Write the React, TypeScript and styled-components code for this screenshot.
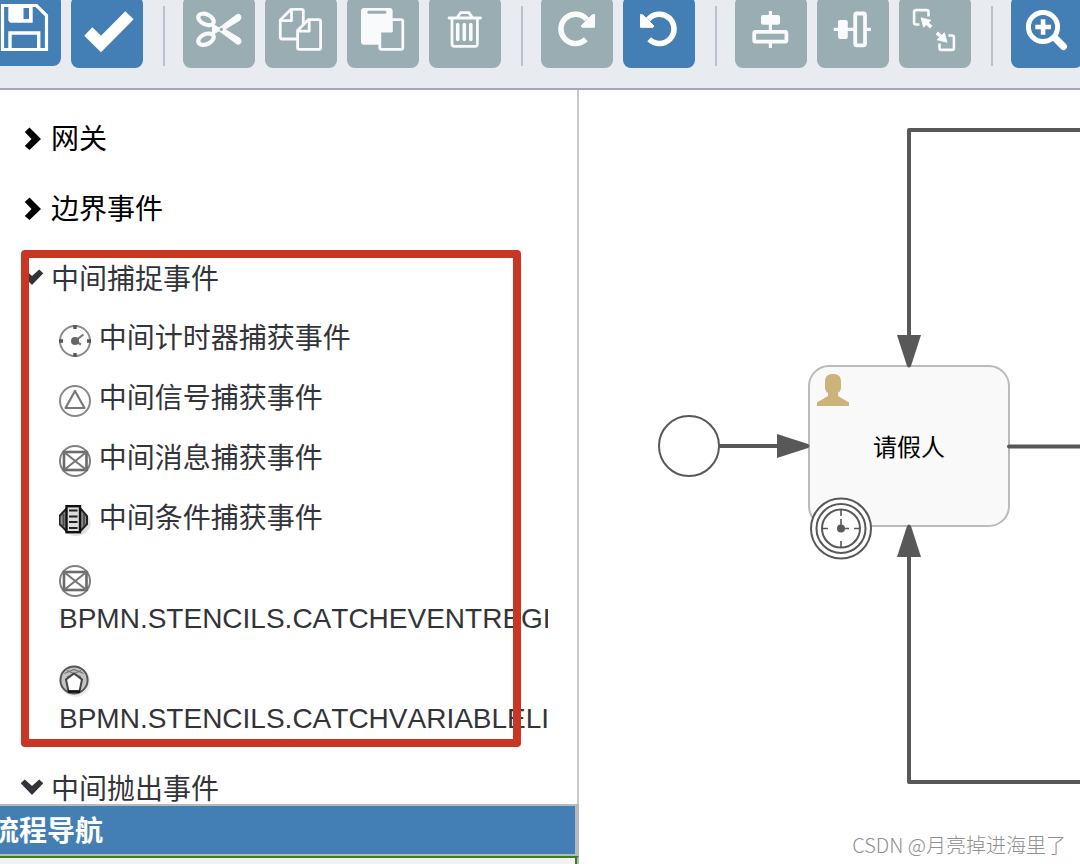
import React from "react";
import styled, { createGlobalStyle, css } from "styled-components";

const BLUE = "#437fb5";
const MUTED = "#99adb3";
const INK = "#585858";

const GlobalStyle = createGlobalStyle`
  *, *::before, *::after { box-sizing: border-box; }
  html, body { margin: 0; }
  body {
    overflow: hidden;
    background: #fff;
    color: #333439;
    font-family: "Liberation Sans", "Noto Sans CJK SC", sans-serif;
    font-size: 28px;
  }
`;

const Page = styled.div`
  position: relative;
  display: flex;
  flex-direction: column;
  height: 100vh;
  overflow: hidden;
`;

const Toolbar = styled.header`
  display: flex;
  align-items: flex-end;
  flex: none;
  gap: 10px;
  height: 90px;
  padding-bottom: 20px;
  overflow: hidden;
  background: #e8ebf0;
  border-bottom: 2px solid #a5a6b8;
`;

const ToolButton = styled.button<{ $first?: boolean }>`
  flex: none;
  width: 72px;
  height: 72px;
  padding: 0;
  border: 0;
  border-radius: 8px;
  background: ${BLUE};
  color: #fff;
  ${(p) => p.$first && css`margin: 0 0 2px -11px;`}
  &:disabled { background: ${MUTED}; color: #f8fafb; }
  svg { display: block; }
`;

const Divider = styled.span`
  flex: none;
  width: 2px;
  height: 60px;
  margin: 0 8px 2px 10px;
  background: #bcc2cd;
`;

const Workspace = styled.main`
  display: grid;
  grid-template-columns: minmax(0, 579px) minmax(0, 1fr);
  flex: 1;
  min-height: 0;
`;

const Sidebar = styled.aside`
  display: flex;
  flex-direction: column;
  min-height: 0;
`;

const Palette = styled.nav`
  display: flex;
  flex-direction: column;
  flex: 1;
  gap: 10px;
  min-height: 0;
  padding: 19px 29px 0 20px;
  overflow: hidden;
  border-right: 2px solid #c8c8ce;
`;

const Group = styled.section`
  flex: none;
`;

const GroupHeader = styled.button<{ $open?: boolean }>`
  display: flex;
  align-items: center;
  gap: 7px;
  width: 100%;
  height: 60px;
  padding: 2px 0 0;
  border: 0;
  background: none;
  color: ${(p) => (p.$open ? "#333439" : "#000")};
  font: inherit;
  line-height: 40px;
  svg { margin-bottom: 4px; }
`;

const ItemList = styled.ul`
  margin: 0;
  padding: 0 0 0 39px;
  list-style: none;
`;

const Item = styled.button`
  display: block;
  width: 100%;
  padding: 10px 0;
  overflow: hidden;
  border: 0;
  background: none;
  color: inherit;
  font: inherit;
  font-kerning: none;
  line-height: 40px;
  text-align: left;
  svg { vertical-align: middle; }
`;

const NavigatorTitle = styled.h2`
  flex: none;
  height: 52px;
  margin: 0;
  overflow: hidden;
  border: 2px solid #b9b9bb;
  border-left: 0;
  box-shadow: inset -2px 0 #b9b9bb;
  background: ${BLUE};
  color: #fff;
  font-size: 28px;
  font-weight: 700;
  line-height: 52px;
  text-indent: -9px;
`;

const Navigator = styled.div`
  flex: none;
  height: 8px;
  background: #f2f2f2;
  border-top: 2px solid #37801f;
  border-right: 2px solid #b9b9bb;
  box-shadow: inset -2px 0 #37801f;
`;

const Canvas = styled.section`
  min-width: 0;
  overflow: hidden;
  svg { display: block; }
`;

const Highlight = styled.div`
  position: absolute;
  top: 250px;
  left: 21px;
  width: 500px;
  height: 497px;
  border: 8px solid #c93624;
  border-radius: 4px;
  pointer-events: none;
`;

const Watermark = styled.div`
  position: absolute;
  right: 14px;
  bottom: 4px;
  color: #8f8f8f;
  font-family: "Noto Sans CJK SC", sans-serif;
  font-size: 20px;
  font-weight: 300;
  line-height: 30px;
`;

const glyphs = {
  save: (
    <>
      <path d="M13.5 11.5H47.5L57.5 21.5V55.5H13.5Z" strokeWidth="3.2" />
      <path d="M19.3 10H43.7V28.7H21.3L19.3 26.7ZM34.5 14V25H40V14Z" fill="currentColor" fillRule="evenodd" stroke="none" />
      <path d="M21 55V39H49.7V55" strokeWidth="3.4" />
    </>
  ),
  check: <path d="M13.3 39.7L21.3 31.3L30 39.7L54.3 15.3L62.7 23.3L30 56.3Z" fill="currentColor" stroke="none" />,
  cut: (
    <>
      <ellipse cx="23" cy="23.4" rx="8.2" ry="5" transform="rotate(25 23 23.4)" strokeWidth="4.2" />
      <ellipse cx="23" cy="43.2" rx="8.2" ry="5" transform="rotate(-25 23 43.2)" strokeWidth="4.2" />
      <path d="M29 27.5L36 32L54 18.5Q57.6 17.3 58 21.5L57 24L42 33.3L57 42.5L58 45Q57.6 49.3 54 48L36 34.8L29 39" fill="currentColor" stroke="currentColor" strokeWidth="1" />
      <circle cx="38.4" cy="33.3" r="1.6" fill={MUTED} stroke="none" />
    </>
  ),
  copy: (
    <g strokeWidth="2.8" strokeLinejoin="round">
      <path d="M32.6 43H17Q15.3 43 15.3 41.3V24L26 13.3H36.7Q38.3 13.3 38.3 15V28.5M15.3 24.7H26.5V13.3" />
      <path d="M32.6 34.5L43.5 23.6H54Q55.6 23.6 55.6 25.2V51.8Q55.6 53.4 54 53.4H34.2Q32.6 53.4 32.6 51.8ZM32.6 35.2H44.2V23.6" fill={MUTED} />
    </g>
  ),
  paste: (
    <g strokeWidth="2.8" strokeLinejoin="round">
      <rect x="14" y="12" width="31.6" height="36.7" rx="3" fill="currentColor" stroke="none" />
      <rect x="20.4" y="14.8" width="19" height="3" rx="1.4" fill={MUTED} stroke="none" />
      <path d="M32.8 34.5L43.7 23.6H54Q55.8 23.6 55.8 25.2V51.8Q55.8 53.4 54 53.4H34.4Q32.8 53.4 32.8 51.8ZM32.8 35.2H44.4V23.6" fill={MUTED} />
    </g>
  ),
  trash: (
    <g strokeWidth="2.8" strokeLinecap="round">
      <path d="M20 22H51.5M23 22V48Q23 50.4 25.4 50.4H46Q48.4 50.4 48.4 48V22M28.5 21L31.7 16.6H39.8L43 21" />
      <path d="M28.7 28.5V43.5M35.3 28.5V43.5M41.8 28.5V43.5" strokeWidth="3.6" />
    </g>
  ),
  redo: (
    <>
      <path d="M44.8 43.3A14.6 14.6 0 1 1 45.8 23.5" strokeWidth="5.6" />
      <path d="M51 19L53.5 18.5V31.3H41L40.3 29.8Z" fill="currentColor" stroke="currentColor" strokeWidth="1" />
    </>
  ),
  alignV: (
    <>
      <path d="M35.4 15V34M35.4 47V52" strokeWidth="3.2" />
      <rect x="26" y="19" width="19" height="9.8" rx="2" fill="currentColor" stroke="none" />
      <rect x="19.2" y="35.9" width="32.2" height="9.8" rx="1.5" strokeWidth="3.8" />
    </>
  ),
  alignH: (
    <>
      <path d="M16.7 33.4H37M49 33.4H54" strokeWidth="3.2" />
      <rect x="21" y="24" width="9.8" height="19" rx="2" fill="currentColor" stroke="none" />
      <rect x="38.2" y="17.5" width="9.8" height="31.8" rx="1.5" strokeWidth="3.8" />
    </>
  ),
  resize: (
    <>
      {[0, 180].map((angle) => (
        <g key={angle} transform={`rotate(${angle} 35 34)`}>
          <path d="M20.5 28.5H17Q15.1 28.5 15.1 26.6V16Q15.1 14.1 17 14.1H27.6Q29.5 14.1 29.5 16V20.5" strokeWidth="2.6" />
          <path d="M22 21.7L32 24.2L24.6 31.3Z" fill="currentColor" strokeWidth="0.8" strokeLinejoin="round" />
          <path d="M26 25.5L32.2 31.2" strokeWidth="3.6" />
        </g>
      ))}
    </>
  ),
  zoomIn: (
    <>
      <circle cx="32" cy="31" r="14.6" strokeWidth="5" />
      <path d="M44 42L52.5 50.5" strokeWidth="7" strokeLinecap="round" />
      <path d="M24.3 31H40M32.1 23.2V38.8" strokeWidth="4.6" />
    </>
  ),
};

type GlyphName = keyof typeof glyphs;

function Tool({ icon, label, off, first, mirrored }: {
  icon: GlyphName; label: string; off?: boolean; first?: boolean; mirrored?: boolean;
}) {
  return (
    <ToolButton type="button" aria-label={label} disabled={off} $first={first}>
      <svg width="72" height="72" viewBox="0 0 72 72" fill="none" stroke="currentColor" aria-hidden="true">
        <g transform={mirrored ? "translate(71 0) scale(-1 1)" : undefined}>{glyphs[icon]}</g>
      </svg>
    </ToolButton>
  );
}

function Chevron({ open }: { open?: boolean }) {
  return (
    <svg width="24" height="24" viewBox="0 0 24 24" fill="currentColor" aria-hidden="true">
      <path d={open ? "M0.7 7.2L4.8 3.4L12 10L19.2 3.4L23.3 7.2L12 19Z" : "M9.5 1.6L21 13L9.5 24L4.8 20L11.5 13L4.8 6Z"} />
    </svg>
  );
}

const eventGlyphs = {
  timer: (
    <g>
      <circle cx="16" cy="16" r="15" stroke="#888" strokeWidth="1.9" />
      <path d="M16 0V4M16 28V32M0 16H4M28 16H32" stroke="#555" strokeWidth="3.4" />
      <path d="M16 16L24.5 9.5M16 16L22 19.5" stroke="#777" strokeWidth="2.2" />
      <circle cx="16" cy="16" r="4" fill="#666" />
    </g>
  ),
  signal: (
    <g>
      <circle cx="16" cy="16" r="15" stroke="#888" strokeWidth="2" />
      <path d="M16 6L25.5 23H6.5Z" stroke="#777" strokeWidth="2.2" strokeLinejoin="round" />
    </g>
  ),
  message: (
    <g>
      <circle cx="16" cy="16" r="15" stroke="#808080" strokeWidth="2" />
      <rect x="5" y="7" width="22.5" height="18" stroke="#6a6a6a" strokeWidth="2.6" />
      <path d="M5 7L27.5 25M27.5 7L5 25" stroke="#777" strokeWidth="2.2" />
    </g>
  ),
  condition: (
    <g>
      <ellipse cx="17" cy="18" rx="14.5" ry="13" fill="#e2e2e2" />
      <path d="M7 4L0.5 11V19L7 25.5H22L28 19V11L22 4Z" fill="#888" stroke="#222" strokeWidth="2" />
      <path d="M4.5 9V21M25 9V21" stroke="#444" strokeWidth="1.6" />
      <rect x="7.5" y="1.2" width="13.5" height="26" fill="#ddd" stroke="#111" strokeWidth="2.4" />
      <path d="M10 5.5H18.5M10 11.5H18.5M10 17H18.5M10 23H18.5" stroke="#222" strokeWidth="2.2" />
    </g>
  ),
  variable: (
    <g>
      <circle cx="16.5" cy="17" r="15" fill="#ececec" />
      <circle cx="15" cy="15" r="13.6" fill="#c4c4c4" stroke="#555" strokeWidth="2" />
      <path d="M5.5 8.5L15 4.5L24.5 8.5M8 5.5L22 12M22 5.5L8 12" stroke="#777" strokeWidth="1.2" />
      <path d="M15 8.5L23 14.5L20.5 26.5H9.5L7 14.5Z" fill="#fff" stroke="#444" strokeWidth="2" />
      <path d="M9 26.5H21" stroke="#111" strokeWidth="2.6" />
    </g>
  ),
};

const catchEvents: { icon: keyof typeof eventGlyphs; label: string }[] = [
  { icon: "timer", label: "中间计时器捕获事件" },
  { icon: "signal", label: "中间信号捕获事件" },
  { icon: "message", label: "中间消息捕获事件" },
  { icon: "condition", label: "中间条件捕获事件" },
  { icon: "message", label: "BPMN.STENCILS.CATCHEVENTREGI" },
  { icon: "variable", label: "BPMN.STENCILS.CATCHVARIABLELI" },
];

function PaletteGroup({ title, open, children }: { title: string; open?: boolean; children?: React.ReactNode }) {
  return (
    <Group>
      <GroupHeader type="button" aria-expanded={!!open} $open={open}>
        <Chevron open={open} />
        {title}
      </GroupHeader>
      {children}
    </Group>
  );
}

function Diagram() {
  return (
    <svg width="100%" height="100%" role="img" aria-label="流程图">
      <g fill="none" stroke={INK} strokeWidth="4" strokeLinejoin="round" strokeLinecap="round">
        <path d="M4000 40H330V248" />
        <path d="M4000 692H330V464" />
        <path d="M141 356H200" />
      </g>
      <rect x="230" y="276" width="200" height="160" rx="20" fill="#f9f9f9" stroke="#bbb" strokeWidth="2" />
      <path d="M430 356.5H4000" stroke={INK} strokeWidth="4" strokeLinecap="round" />
      <g fill={INK}>
        <path d="M318 245H342L332 276Q330 279 328 276Z" />
        <path d="M318 467H342L332 436Q330 433 328 436Z" />
        <path d="M198 344V368L229 358Q232 356 229 354Z" />
      </g>
      <circle cx="110" cy="356" r="30" fill="#fff" stroke={INK} strokeWidth="2" />
      <path
        d="M246 292C246 286 249 284 254 284S262 286 262 292V297C262 300 261 302 259 303V306L270 312.5V316H238V312.5L249 306V303C247 302 246 300 246 297Z"
        fill="#ccb37a"
      />
      <text x="330" y="366" textAnchor="middle" fontFamily='"Noto Sans CJK SC", sans-serif' fontSize="24" fill="#000">
        请假人
      </text>
      <g fill="#fff" stroke={INK} strokeWidth="2">
        <circle cx="262" cy="438.5" r="30" />
        <circle cx="262" cy="438.5" r="24.5" />
        <circle cx="262" cy="438.5" r="19" />
        <path d="M262 419V426M262 429V438M262 451V458M243 438.5H249M262 438.5H270M275 438.5H281" strokeWidth="1.6" />
        <circle cx="262" cy="438.5" r="4" fill={INK} stroke="none" />
      </g>
    </svg>
  );
}

export default function App() {
  return (
    <>
      <GlobalStyle />
      <Page>
        <Toolbar>
          <Tool icon="save" label="保存" first />
          <Tool icon="check" label="校验" />
          <Divider />
          <Tool icon="cut" label="剪切" off />
          <Tool icon="copy" label="复制" off />
          <Tool icon="paste" label="粘贴" off />
          <Tool icon="trash" label="删除" off />
          <Divider />
          <Tool icon="redo" label="重做" off />
          <Tool icon="redo" label="撤销" mirrored />
          <Divider />
          <Tool icon="alignV" label="垂直对齐" off />
          <Tool icon="alignH" label="水平对齐" off />
          <Tool icon="resize" label="相同大小" off />
          <Divider />
          <Tool icon="zoomIn" label="放大" />
        </Toolbar>
        <Workspace>
          <Sidebar>
            <Palette>
              <PaletteGroup title="网关" />
              <PaletteGroup title="边界事件" />
              <PaletteGroup title="中间捕捉事件" open>
                <ItemList>
                  {catchEvents.map(({ icon, label }) => (
                    <li key={label}>
                      <Item type="button">
                        <svg width="32" height="32" viewBox="0 0 32 32" fill="none" aria-hidden="true">
                          {eventGlyphs[icon]}
                        </svg>{" "}
                        {label}
                      </Item>
                    </li>
                  ))}
                </ItemList>
              </PaletteGroup>
              <PaletteGroup title="中间抛出事件" open />
            </Palette>
            <NavigatorTitle>流程导航</NavigatorTitle>
            <Navigator />
          </Sidebar>
          <Canvas>
            <Diagram />
          </Canvas>
        </Workspace>
        <Highlight />
        <Watermark>CSDN @月亮掉进海里了</Watermark>
      </Page>
    </>
  );
}
